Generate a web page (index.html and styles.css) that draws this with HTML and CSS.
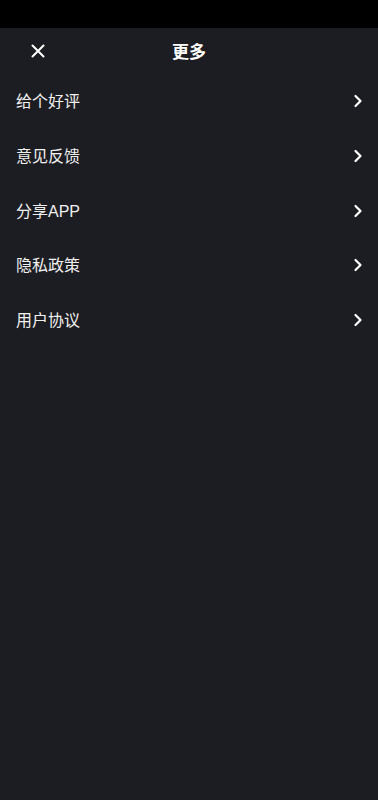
FILE: index.html
```html
<!DOCTYPE html>
<html lang="zh">
<head>
<meta charset="utf-8">
<link rel="stylesheet" href="styles.css">
</head>
<body>
<div class="status"></div>
<div class="header">
  <svg class="close" width="16" height="16" viewBox="0 0 16 16"><path d="M2.5 2.5 L13.5 13.5 M13.5 2.5 L2.5 13.5" stroke="#fff" stroke-width="2" stroke-linecap="round" fill="none"/></svg>
  <div class="title">更多</div>
</div>
<div class="list">
  <div class="item"><span>给个好评</span><svg class="chev" width="10" height="14" viewBox="0 0 10 14"><path d="M2.5 2 L7.5 7 L2.5 12" stroke="#fff" stroke-width="2.2" stroke-linecap="round" stroke-linejoin="round" fill="none"/></svg></div>
  <div class="item"><span>意见反馈</span><svg class="chev" width="10" height="14" viewBox="0 0 10 14"><path d="M2.5 2 L7.5 7 L2.5 12" stroke="#fff" stroke-width="2.2" stroke-linecap="round" stroke-linejoin="round" fill="none"/></svg></div>
  <div class="item"><span>分享APP</span><svg class="chev" width="10" height="14" viewBox="0 0 10 14"><path d="M2.5 2 L7.5 7 L2.5 12" stroke="#fff" stroke-width="2.2" stroke-linecap="round" stroke-linejoin="round" fill="none"/></svg></div>
  <div class="item"><span>隐私政策</span><svg class="chev" width="10" height="14" viewBox="0 0 10 14"><path d="M2.5 2 L7.5 7 L2.5 12" stroke="#fff" stroke-width="2.2" stroke-linecap="round" stroke-linejoin="round" fill="none"/></svg></div>
  <div class="item"><span>用户协议</span><svg class="chev" width="10" height="14" viewBox="0 0 10 14"><path d="M2.5 2 L7.5 7 L2.5 12" stroke="#fff" stroke-width="2.2" stroke-linecap="round" stroke-linejoin="round" fill="none"/></svg></div>
</div>
</body>
</html>
```
FILE: styles.css
```css
html, body {
  margin: 0;
  padding: 0;
  background: #1c1d22;
  height: 100%;
}
body {
  font-family: "Liberation Sans", "Noto Sans CJK SC", sans-serif;
  color: #fff;
}
.status {
  height: 28px;
  background: #000;
}
.header {
  height: 47px;
  display: flex;
  align-items: center;
  justify-content: center;
  position: relative;
}
.close {
  position: absolute;
  left: 30px;
  top: 15px;
}
.title {
  font-size: 17px;
  font-weight: 700;
  line-height: 1;
  padding-top: 2px;
}
.list {
  display: flex;
  flex-direction: column;
}
.item {
  height: 54.7px;
  display: flex;
  align-items: center;
  justify-content: space-between;
  padding: 0 15px 0 16px;
  font-size: 16px;
  color: #f0f0f0;
}
.item span {
  line-height: 1;
}
.chev {
  display: block;
  margin-top: -2px;
}
```
